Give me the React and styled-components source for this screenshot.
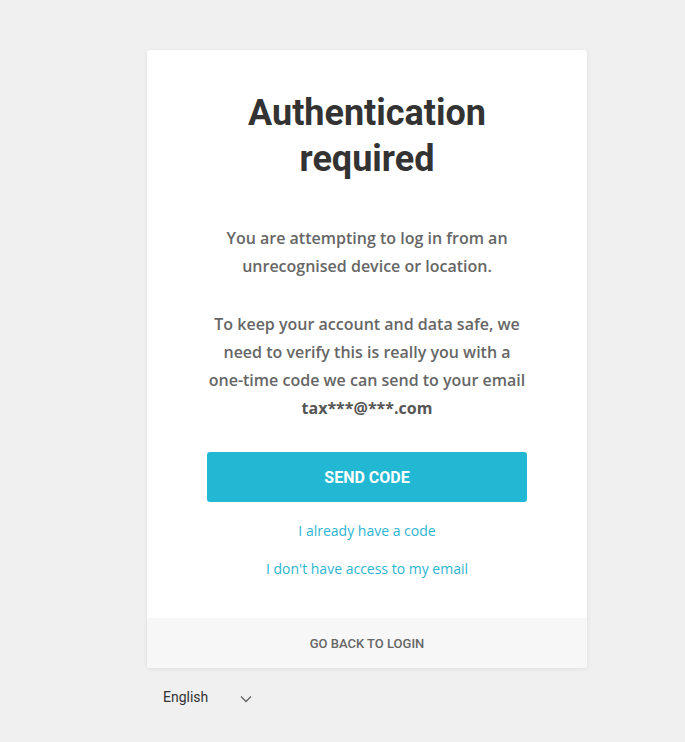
import React from "react";
import styled, { createGlobalStyle } from "styled-components";

const GlobalStyle = createGlobalStyle`
  html, body {
    margin: 0;
    padding: 0;
    background: #f0f0f0;
  }
  body {
    font-family: "Open Sans", sans-serif;
  }
`;

const Page = styled.div`
  min-height: 742px;
  display: flex;
  flex-direction: column;
  align-items: flex-start;
  padding: 50px 0 0 147px;
  box-sizing: border-box;
`;

const Card = styled.section`
  width: 440px;
  background: #fff;
  border-radius: 3px;
  box-shadow: 0 1px 4px rgba(0, 0, 0, 0.08);
  overflow: hidden;
`;

const Body = styled.div`
  padding: 40px 40px 39px;
  text-align: center;
`;

const Title = styled.h1`
  margin: 0 0 42px;
  font-family: Roboto, sans-serif;
  font-weight: 700;
  font-size: 36px;
  line-height: 46px;
  color: #333;
`;

const Text = styled.p`
  margin: 0 0 30px;
  font-family: "Open Sans", sans-serif;
  font-weight: 600;
  font-size: 16px;
  line-height: 28px;
  color: #666;

  strong {
    font-weight: 700;
    color: #555;
  }
`;

const Button = styled.button`
  display: block;
  width: 320px;
  height: 50px;
  margin: 0 auto;
  border: none;
  border-radius: 3px;
  background: #22b8d3;
  color: #fff;
  font-family: Roboto, sans-serif;
  font-weight: 700;
  font-size: 16px;
  text-transform: uppercase;
  cursor: pointer;
`;

const Links = styled.div`
  display: flex;
  flex-direction: column;
  align-items: center;
  gap: 18px;
  margin-top: 19px;
`;

const TextLink = styled.a`
  font-family: "Open Sans", sans-serif;
  font-size: 14px;
  line-height: 20px;
  color: #2bb5d0;
  text-decoration: none;
`;

const Footer = styled.div`
  height: 50px;
  display: flex;
  align-items: center;
  justify-content: center;
  background: #f7f7f7;
  font-family: Roboto, sans-serif;
  font-weight: 500;
  font-size: 13px;
  color: #666;
  text-transform: uppercase;
`;

const LangRow = styled.div`
  width: 440px;
  padding: 17px 16px;
  box-sizing: border-box;
`;

const LangSelect = styled.div`
  display: inline-flex;
  align-items: center;
  gap: 32px;
  font-family: Roboto, sans-serif;
  font-size: 14px;
  color: #333;

  svg {
    margin-top: 3px;
  }
`;

export default function App() {
  return (
    <>
      <GlobalStyle />
      <Page>
        <Card>
          <Body>
            <Title>Authentication<br />required</Title>
            <Text>You are attempting to log in from an<br />unrecognised device or location.</Text>
            <Text>
              To keep your account and data safe, we<br />
              need to verify this is really you with a<br />
              one-time code we can send to your email<br />
              <strong>tax***@***.com</strong>
            </Text>
            <Button>Send code</Button>
            <Links>
              <TextLink href="#code">I already have a code</TextLink>
              <TextLink href="#noaccess">I don't have access to my email</TextLink>
            </Links>
          </Body>
          <Footer>Go back to login</Footer>
        </Card>
        <LangRow>
          <LangSelect>
            English
            <svg width="12" height="8" viewBox="0 0 12 8">
              <path d="M1 1.5l5 5 5-5" fill="none" stroke="#666" strokeWidth="1.4" />
            </svg>
          </LangSelect>
        </LangRow>
      </Page>
    </>
  );
}
